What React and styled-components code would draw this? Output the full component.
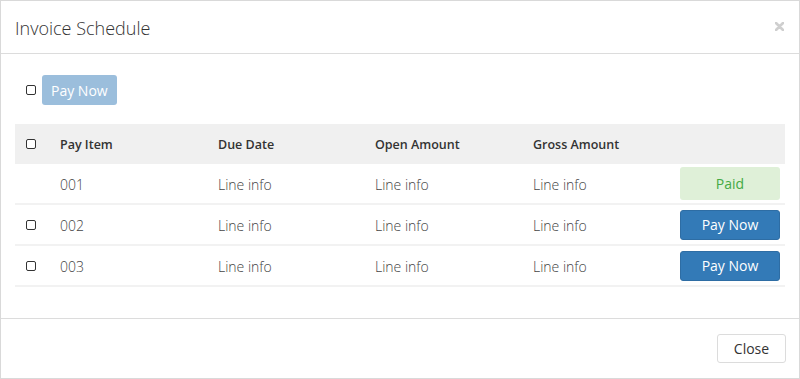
import React from "react";
import styled, { createGlobalStyle } from "styled-components";

const GlobalStyle = createGlobalStyle`
  *, *::before, *::after {
    box-sizing: border-box;
  }
  body {
    margin: 0;
    background: #fff;
    font-family: "Open Sans", "Liberation Sans", sans-serif;
    color: #333;
  }
`;

const Modal = styled.div`
  width: 800px;
  height: 379px;
  border: 1px solid #d9d9d9;
  display: flex;
  flex-direction: column;
  background: #fff;
`;

const Header = styled.div`
  height: 53px;
  flex-shrink: 0;
  border-bottom: 1px solid #dcdcdc;
  display: flex;
  align-items: center;
  justify-content: space-between;
  padding: 1px 15px 0 14px;
`;

const Title = styled.h4`
  margin: 0;
  font-size: 18px;
  font-weight: 300;
  color: #333;
`;

const CloseX = styled.button`
  border: none;
  background: transparent;
  padding: 0;
  width: 10px;
  height: 10px;
  display: flex;
  align-items: center;
  justify-content: center;
  cursor: pointer;
  margin-top: -2px;
`;

const Body = styled.div`
  flex: 1;
  padding: 21px 14px 0;
`;

const Toolbar = styled.div`
  display: flex;
  align-items: center;
  gap: 6px;
  padding-left: 11px;
  margin-bottom: 19px;
`;

const Check = styled.span`
  display: inline-block;
  width: 10px;
  height: 10px;
  border: 1.5px solid #333;
  border-radius: 2px;
  background: #fff;
`;

const Button = styled.button`
  font-family: "Open Sans", "Liberation Sans", sans-serif;
  font-size: 14px;
  font-weight: 400;
  height: ${(p) => p.$h || 30}px;
  width: ${(p) => (p.$w ? `${p.$w}px` : "auto")};
  padding: 0 8px;
  border-radius: 3px;
  border: 1px solid transparent;
  cursor: pointer;
  background: ${(p) =>
    p.$variant === "primary"
      ? "#337ab7"
      : p.$variant === "disabled"
      ? "#9bbedc"
      : p.$variant === "paid"
      ? "#dff0d8"
      : "#fff"};
  color: ${(p) =>
    p.$variant === "paid"
      ? "#45aa45"
      : p.$variant === "default"
      ? "#333"
      : "#fff"};
  border-color: ${(p) =>
    p.$variant === "primary"
      ? "#2e6da4"
      : p.$variant === "default"
      ? "#dcdcdc"
      : "transparent"};
`;

const Table = styled.div`
  display: flex;
  flex-direction: column;
`;

const Row = styled.div`
  display: grid;
  grid-template-columns: 45px 158px 157px 158px 147px 105px;
  align-items: center;
  height: ${(p) => (p.$head ? 40 : 41)}px;
  background: ${(p) => (p.$head ? "#f0f0f0" : "#fff")};
  border-bottom: ${(p) => (p.$head ? "none" : "2px solid #f2f2f2")};
`;

const CheckCell = styled.div`
  padding-left: 11px;
  display: flex;
  align-items: center;
`;

const HeadCell = styled.div`
  font-size: 12.5px;
  font-weight: 600;
  color: #333;
`;

const Cell = styled.div`
  font-size: 14px;
  font-weight: 300;
  color: #444;
  padding-top: 1px;
`;

const ActionCell = styled.div`
  display: flex;
  justify-content: flex-start;
`;

const Footer = styled.div`
  height: 60px;
  flex-shrink: 0;
  border-top: 1px solid #dcdcdc;
  display: flex;
  align-items: center;
  justify-content: flex-end;
  padding: 0 13px 0 14px;
`;

const rows = [
  { id: "001", paid: true },
  { id: "002", paid: false },
  { id: "003", paid: false },
];

const App = () => {
  return (
    <>
      <GlobalStyle />
      <Modal>
        <Header>
          <Title>Invoice Schedule</Title>
          <CloseX aria-label="close">
            <svg width="9" height="9" viewBox="0 0 9 9">
              <path
                d="M1 1 L8 8 M8 1 L1 8"
                stroke="#cfcfcf"
                strokeWidth="2.6"
                strokeLinecap="round"
              />
            </svg>
          </CloseX>
        </Header>
        <Body>
          <Toolbar>
            <Check />
            <Button $variant="disabled">Pay Now</Button>
          </Toolbar>
          <Table>
            <Row $head>
              <CheckCell>
                <Check />
              </CheckCell>
              <HeadCell>Pay Item</HeadCell>
              <HeadCell>Due Date</HeadCell>
              <HeadCell>Open Amount</HeadCell>
              <HeadCell>Gross Amount</HeadCell>
              <div />
            </Row>
            {rows.map((r) => (
              <Row key={r.id}>
                <CheckCell>{!r.paid && <Check />}</CheckCell>
                <Cell>{r.id}</Cell>
                <Cell>Line info</Cell>
                <Cell>Line info</Cell>
                <Cell>Line info</Cell>
                <ActionCell>
                  {r.paid ? (
                    <Button $variant="paid" $w={100} $h={33}>
                      Paid
                    </Button>
                  ) : (
                    <Button $variant="primary" $w={100}>
                      Pay Now
                    </Button>
                  )}
                </ActionCell>
              </Row>
            ))}
          </Table>
        </Body>
        <Footer>
          <Button $variant="default" $w={69} $h={29}>
            Close
          </Button>
        </Footer>
      </Modal>
    </>
  );
};

export default App;
